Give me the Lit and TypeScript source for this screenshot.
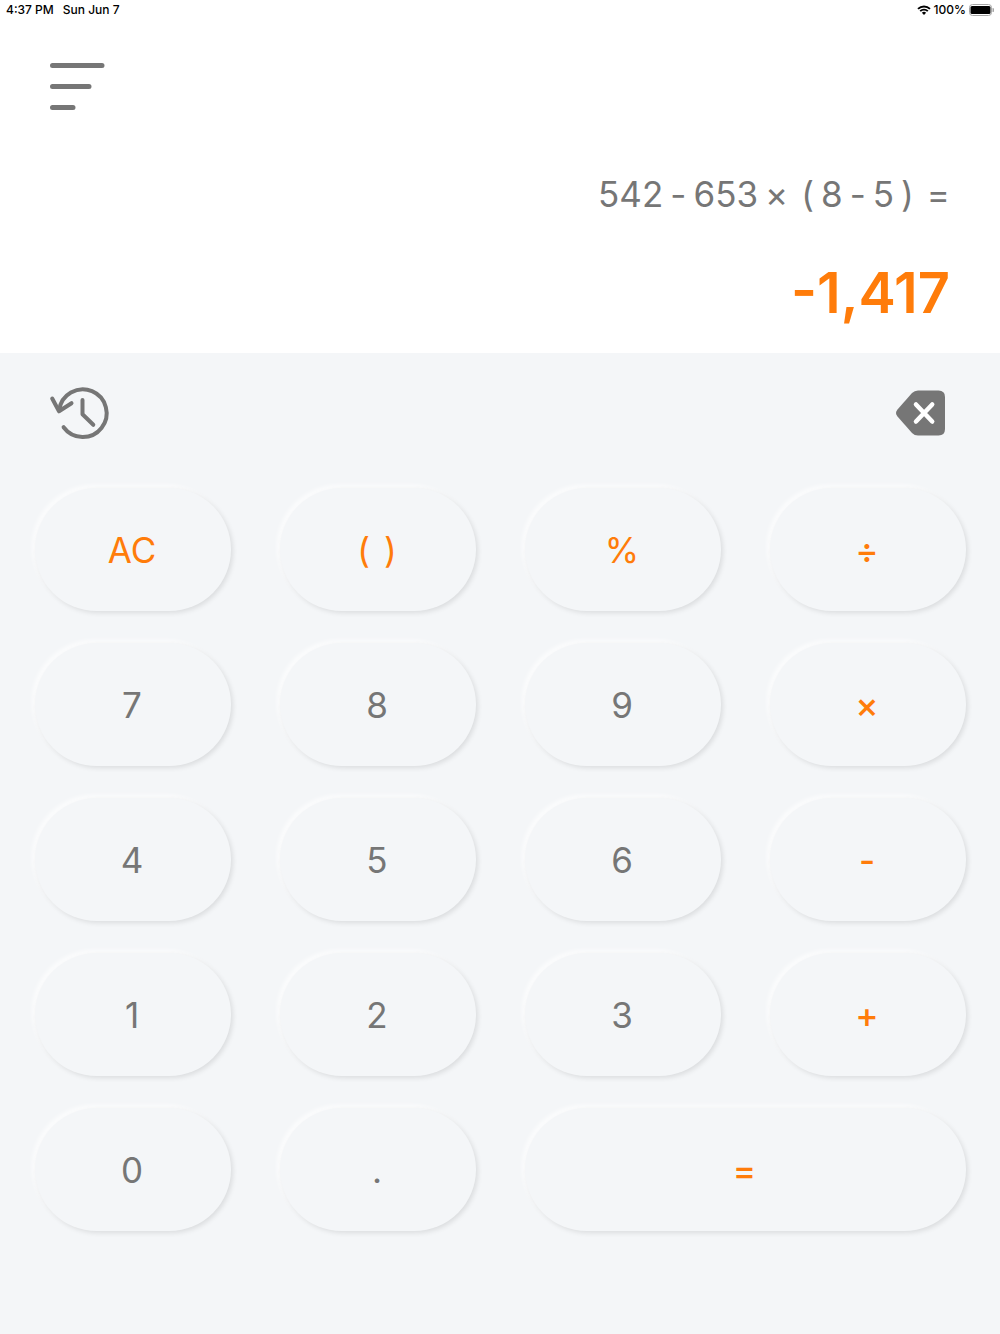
import { LitElement, html, css } from "lit";
import { customElement } from "lit/decorators.js";
import { classMap } from "lit/directives/class-map.js";

interface Key {
  parts: string[];
  name: string;
  accent?: boolean;
  operator?: boolean;
  wide?: boolean;
}

const digit = (d: string): Key => ({ parts: [d], name: d });
const operator = (sign: string, name: string): Key => ({
  parts: [sign],
  name,
  accent: true,
  operator: true,
});

const KEYS: Key[] = [
  { parts: ["AC"], name: "AC, all clear", accent: true },
  { parts: ["(", ")"], name: "Parentheses", accent: true },
  { parts: ["%"], name: "Percent", accent: true },
  operator("÷", "Divide"),
  digit("7"),
  digit("8"),
  digit("9"),
  operator("×", "Multiply"),
  digit("4"),
  digit("5"),
  digit("6"),
  operator("-", "Subtract"),
  digit("1"),
  digit("2"),
  digit("3"),
  operator("+", "Add"),
  digit("0"),
  { parts: ["."], name: "Decimal point" },
  { ...operator("=", "Equals"), wide: true },
];

@customElement("app-root")
export class AppRoot extends LitElement {
  static styles = css`
    :host {
      display: flex;
      flex-direction: column;
      min-height: 100vh;
      background: #fff;
      color: #767676;
      font-family: Inter, "Liberation Sans", sans-serif;
    }
    button {
      border: 0;
      padding: 0;
      background: none;
      color: inherit;
      font: inherit;
      cursor: pointer;
    }
    svg {
      display: block;
    }
    .status {
      display: flex;
      justify-content: space-between;
      align-items: center;
      height: 19px;
      padding: 0 6px 1px 6px;
      color: #000;
      font-size: 12px;
      font-weight: 500;
      line-height: 18px;
    }
    .group {
      display: flex;
      align-items: center;
      gap: 9px;
    }
    .group.right {
      gap: 3px;
    }
    .bar {
      display: flex;
      padding: 40px 48px 0;
    }
    .display {
      display: flex;
      flex-direction: column;
      align-items: flex-end;
      gap: 41px;
      padding: 60px 50px 24px;
    }
    .expression {
      display: flex;
      gap: 7px;
      font-size: 35px;
      line-height: 44px;
    }
    .spaced {
      padding-left: 6px;
    }
    .result {
      color: #ff7c0a;
      font-size: 56px;
      font-weight: 600;
      line-height: 72px;
    }
    .panel {
      flex: 1;
      background: #f4f6f8;
    }
    .tools {
      display: flex;
      justify-content: space-between;
      align-items: center;
      padding: 30px 50px 45px 48px;
    }
    .keys {
      display: grid;
      grid-template-columns: repeat(4, 1fr);
      grid-auto-rows: 123px;
      gap: 32px 49px;
      padding: 0 34px 60px 35px;
    }
    .key {
      display: flex;
      justify-content: center;
      align-items: center;
      gap: 14px;
      padding-right: 2px;
      border-radius: 62px;
      background: #f4f6f8;
      box-shadow: 2px 2px 5px rgba(0, 0, 0, 0.1), -3px -3px 4px rgba(255, 255, 255, 0.7);
      font-size: 35px;
      line-height: 44px;
    }
    .accent {
      color: #ff7c0a;
    }
    .operator {
      font-weight: 450;
    }
    .wide {
      grid-column: span 2;
    }
  `;

  render() {
    return html`
      <header class="status">
        <div class="group"><span>4:37 PM</span><span>Sun Jun 7</span></div>
        <div class="group right">
          <svg width="14" height="10" viewBox="0 0 14 10" fill="none" stroke="#000" stroke-width="1.9" aria-hidden="true">
            <path d="M1 3.9a8.6 8.6 0 0 1 12 0M3.2 6.2a5.4 5.4 0 0 1 7.6 0" />
            <path d="M7 9.9 4.9 7.8a3 3 0 0 1 4.2 0z" fill="#000" stroke="none" />
          </svg>
          <span>100%</span>
          <svg width="25" height="12" viewBox="0 0 25 12" aria-hidden="true">
            <rect x=".5" y=".5" width="22" height="11" rx="3" fill="none" stroke="#a6a6a6" />
            <rect x="1.5" y="2" width="20" height="8" rx="1.5" />
            <path d="M23.5 4v4a2 2 0 0 0 0-4z" fill="#a6a6a6" />
          </svg>
        </div>
      </header>
      <nav class="bar">
        <button aria-label="Menu">
          <svg width="60" height="52" viewBox="0 0 60 52" stroke="#767676" stroke-width="5" stroke-linecap="round">
            <path d="M4.5 5.5H54M4.5 26.5H41M4.5 47.5H25" />
          </svg>
        </button>
      </nav>
      <section class="display" aria-label="Display">
        <div class="expression">
          <span>542</span><span>-</span><span>653</span><span>×</span>
          <span class="spaced">(</span><span>8</span><span>-</span><span>5</span><span>)</span>
          <span class="spaced">=</span>
        </div>
        <output class="result">-1,417</output>
      </section>
      <main class="panel">
        <div class="tools">
          <button aria-label="History">
            <svg width="64" height="60" viewBox="0 0 64 60" fill="none" stroke="#767676" stroke-width="4" stroke-linecap="round" stroke-linejoin="round">
              <path d="M11.2 27.2A23.8 23.8 0 1 1 15.6 44.2" />
              <path d="M4.2 15.5 11 28.3 23.5 20.2M34.5 17V31.3L45.3 41.8" />
            </svg>
          </button>
          <button aria-label="Delete">
            <svg width="54" height="60" viewBox="0 0 54 60">
              <path d="M22 7.5H42.5Q49 7.5 49 14V46Q49 52.5 42.5 52.5H22Q18.5 52.5 16 50L1.5 33.5Q-1.5 30 1.5 26.5L16 10Q18.5 7.5 22 7.5Z" fill="#767676" />
              <path d="M20 21.5 36.2 38.5M36.2 21.5 20 38.5" stroke="#fff" stroke-width="4.5" stroke-linecap="round" />
            </svg>
          </button>
        </div>
        <div class="keys">
          ${KEYS.map(
            (k) => html`<button
              class=${classMap({ key: true, accent: !!k.accent, operator: !!k.operator, wide: !!k.wide })}
              aria-label=${k.name}
            >${k.parts.map((p) => html`<span>${p}</span>`)}</button>`
          )}
        </div>
      </main>
    `;
  }
}
